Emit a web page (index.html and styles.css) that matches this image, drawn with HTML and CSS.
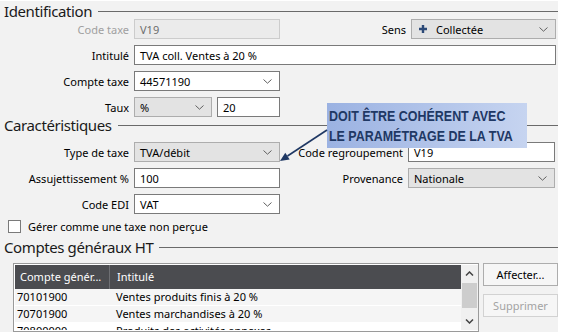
FILE: index.html
```html
<!DOCTYPE html>
<html lang="fr">
<head>
    <meta charset="UTF-8">
    <title>Taxe V19</title>
    <link rel="stylesheet" href="styles.css">
</head>
<body>
    <div class="dialog">
        <!-- Identification -->
        <h2 class="group-title">Identification</h2>
        <div class="form ident">
            <span class="lbl muted">Code taxe</span>
            <div class="field disabled">V19</div>
            <span class="lbl">Sens</span>
            <div class="field select grey">
                <svg class="plus" width="8" height="8" viewBox="0 0 8 8"><path d="M2.8 0h2.4v2.8H8v2.4H5.2V8H2.8V5.2H0V2.8h2.8z" fill="#2d4a78"/></svg>
                <span class="val">Collectée</span>
                <svg class="chev" width="9" height="5" viewBox="0 0 9 5"><path d="M0.5 0.5 4.5 4.2 8.5 0.5" fill="none" stroke="#606060"/></svg>
            </div>

            <span class="lbl first">Intitulé</span>
            <div class="field wide">TVA coll. Ventes à 20 %</div>

            <span class="lbl first">Compte taxe</span>
            <div class="field select">
                <span class="val">44571190</span>
                <svg class="chev" width="9" height="5" viewBox="0 0 9 5"><path d="M0.5 0.5 4.5 4.2 8.5 0.5" fill="none" stroke="#606060"/></svg>
            </div>

            <span class="lbl first">Taux</span>
            <div class="pair">
                <div class="field select grey">
                    <span class="val">%</span>
                    <svg class="chev" width="9" height="5" viewBox="0 0 9 5"><path d="M0.5 0.5 4.5 4.2 8.5 0.5" fill="none" stroke="#606060"/></svg>
                </div>
                <div class="field">20</div>
            </div>
        </div>

        <!-- Caractéristiques -->
        <h2 class="group-title">Caractéristiques</h2>
        <div class="form carac">
            <span class="lbl">Type de taxe</span>
            <div class="field select grey">
                <span class="val">TVA/débit</span>
                <svg class="chev" width="9" height="5" viewBox="0 0 9 5"><path d="M0.5 0.5 4.5 4.2 8.5 0.5" fill="none" stroke="#606060"/></svg>
            </div>
            <span class="lbl">Code regroupement</span>
            <div class="field">V19</div>

            <span class="lbl first">Assujettissement %</span>
            <div class="field">100</div>
            <span class="lbl">Provenance</span>
            <div class="field select grey">
                <span class="val">Nationale</span>
                <svg class="chev" width="9" height="5" viewBox="0 0 9 5"><path d="M0.5 0.5 4.5 4.2 8.5 0.5" fill="none" stroke="#606060"/></svg>
            </div>

            <span class="lbl first">Code EDI</span>
            <div class="field select">
                <span class="val">VAT</span>
                <svg class="chev" width="9" height="5" viewBox="0 0 9 5"><path d="M0.5 0.5 4.5 4.2 8.5 0.5" fill="none" stroke="#606060"/></svg>
            </div>
        </div>
        <label class="check-row"><span class="check"></span>Gérer comme une taxe non perçue</label>

        <!-- Comptes généraux HT -->
        <h2 class="group-title">Comptes généraux HT</h2>
        <div class="accounts">
            <div class="table">
                <div class="list">
                    <div class="row head">
                        <div class="c1">Compte génér...</div>
                        <div class="c2">Intitulé</div>
                    </div>
                    <div class="row">
                        <div class="c1">70101900</div>
                        <div class="c2">Ventes produits finis à 20 %</div>
                    </div>
                    <div class="row">
                        <div class="c1">70701900</div>
                        <div class="c2">Ventes marchandises à 20 %</div>
                    </div>
                    <div class="row plain">
                        <div class="c1">70800000</div>
                        <div class="c2">Produits des activités annexes</div>
                    </div>
                </div>
                <div class="scrollbar">
                    <div class="arrow"><svg width="9" height="5" viewBox="0 0 9 5"><path d="M1 4.5 4.5 1 8 4.5" fill="none" stroke="#444" stroke-width="1.5"/></svg></div>
                    <div class="thumb"></div>
                    <div class="arrow down"><svg width="9" height="5" viewBox="0 0 9 5"><path d="M1 0.5 4.5 4 8 0.5" fill="none" stroke="#444" stroke-width="1.5"/></svg></div>
                </div>
            </div>
            <div class="actions">
                <button class="btn">Affecter...</button>
                <button class="btn" disabled>Supprimer</button>
            </div>
        </div>

        <!-- annotation -->
        <div class="callout">
            <span class="callout-line">DOIT ÊTRE COHÉRENT AVEC</span>
            <span class="callout-line">LE PARAMÉTRAGE DE LA TVA</span>
        </div>
        <svg class="callout-arrow" width="70" height="50" viewBox="0 0 70 50">
            <line x1="57" y1="9" x2="17.5" y2="35" stroke="#1f3864" stroke-width="1.6"/>
            <polygon points="10,40 19.7,38.4 15.3,31.7" fill="#1f3864"/>
        </svg>
    </div>
</body>
</html>
```

FILE: styles.css
```css
body {
    margin: 0;
    background: #fff;
    font-family: "Noto Sans", "Open Sans", sans-serif;
    font-size: 11px;
    color: #000;
}
.dialog {
    position: relative;
    width: 558px;
    height: 331px;
    margin-top: 3px;
    background: #f2f2f2;
}
.group-title {
    display: flex;
    align-items: center;
    gap: 6px;
    height: 20px;
    margin: -2px 0;
    padding-left: 4px;
    font-size: 15px;
    font-weight: normal;
    letter-spacing: -0.4px;
    line-height: 20px;
    color: #1a1a1a;
    white-space: nowrap;
}
.group-title::after {
    content: "";
    flex: 1;
    border-top: 1px solid #6a6a6a;
}
.form {
    display: grid;
    column-gap: 5px;
    row-gap: 6px;
    grid-auto-rows: 20px;
}
.ident {
    grid-template-columns: 129px 146px 121px 145px;
}
.carac {
    grid-template-columns: 129px 146px 118px 147px;
    margin-top: 9px;
}
.lbl {
    align-self: center;
    text-align: right;
    white-space: nowrap;
}
.lbl.first {
    grid-column: 1;
}
.muted {
    color: #a0a0a0;
}
.field {
    box-sizing: border-box;
    display: flex;
    align-items: center;
    height: 20px;
    padding: 0 5px;
    border: 1px solid #7a7a7a;
    background: #fff;
    white-space: nowrap;
}
.field.wide {
    grid-column: 2 / 5;
}
.field.disabled {
    background: #ebebeb;
    border-color: #cccccc;
    color: #6d6d6d;
}
.select .val {
    flex: 1;
}
.select.grey {
    background: #e3e3e3;
    border-color: #adadad;
}
.chev {
    margin-right: 2px;
}
.plus {
    margin: 0 9px 0 2px;
}
.pair {
    display: grid;
    grid-template-columns: 78px 1fr;
    gap: 5px;
}
.check-row {
    display: flex;
    align-items: center;
    gap: 7px;
    height: 15px;
    margin-top: 5px;
    padding-left: 8px;
}
.check {
    box-sizing: border-box;
    width: 13px;
    height: 13px;
    border: 1px solid #7a7a7a;
    background: #fff;
}
.dialog > .group-title:nth-of-type(3) {
    margin-top: 3px;
}
.accounts {
    display: flex;
    gap: 4px;
    margin-top: 8px;
    padding-left: 13px;
}
.table {
    box-sizing: border-box;
    display: flex;
    width: 466px;
    height: 69px;
    padding: 1px 0 1px 1px;
    border: 1px solid #9a9a9a;
    background: #fff;
}
.list {
    flex: 1;
    overflow: hidden;
}
.row {
    display: flex;
    height: 16px;
    line-height: 16px;
    background: #f5f5f5;
    border-bottom: 1px solid #fff;
    white-space: nowrap;
}
.row.plain {
    background: #fff;
}
.row .c1 {
    width: 95px;
    padding-left: 2px;
    box-sizing: border-box;
}
.row .c2 {
    padding-left: 6px;
}
.row.head {
    height: 24px;
    line-height: 24px;
    background: #4b4c50;
    color: #fff;
    border-bottom: 0;
}
.row.head .c1 {
    padding-left: 5px;
    border-right: 1px solid #6e6f73;
}
.row.head .c2 {
    padding-left: 7px;
}
.scrollbar {
    display: flex;
    flex-direction: column;
    width: 17px;
    background: #f0f0f0;
}
.arrow {
    display: flex;
    align-items: center;
    justify-content: center;
    height: 17px;
}
.arrow.down {
    margin-top: auto;
}
.thumb {
    height: 25px;
    margin: 1px 1px 0;
    background: #cdcdcd;
}
.actions {
    display: flex;
    flex-direction: column;
    gap: 8px;
    width: 75px;
}
.btn {
    height: 23px;
    padding: 0;
    border: 1px solid #adadad;
    background: #f6f6f6;
    font-family: inherit;
    font-size: 11px;
    color: #000;
}
.btn:disabled {
    border-color: #d2d2d2;
    color: #a3a3a3;
}
.callout {
    position: absolute;
    left: 327px;
    top: 102px;
    width: 200px;
    height: 45px;
    box-sizing: border-box;
    padding: 3px 0 0 2px;
    background: linear-gradient(to right, #9bb2e2, #c6d4f0);
    font-family: "Liberation Sans", sans-serif;
    font-weight: bold;
    font-size: 15px;
    line-height: 20px;
    color: #1f3864;
    white-space: nowrap;
}
.callout-line {
    display: block;
    transform: scaleX(0.83);
    transform-origin: left center;
}
.callout-arrow {
    position: absolute;
    left: 270px;
    top: 120px;
}
```
